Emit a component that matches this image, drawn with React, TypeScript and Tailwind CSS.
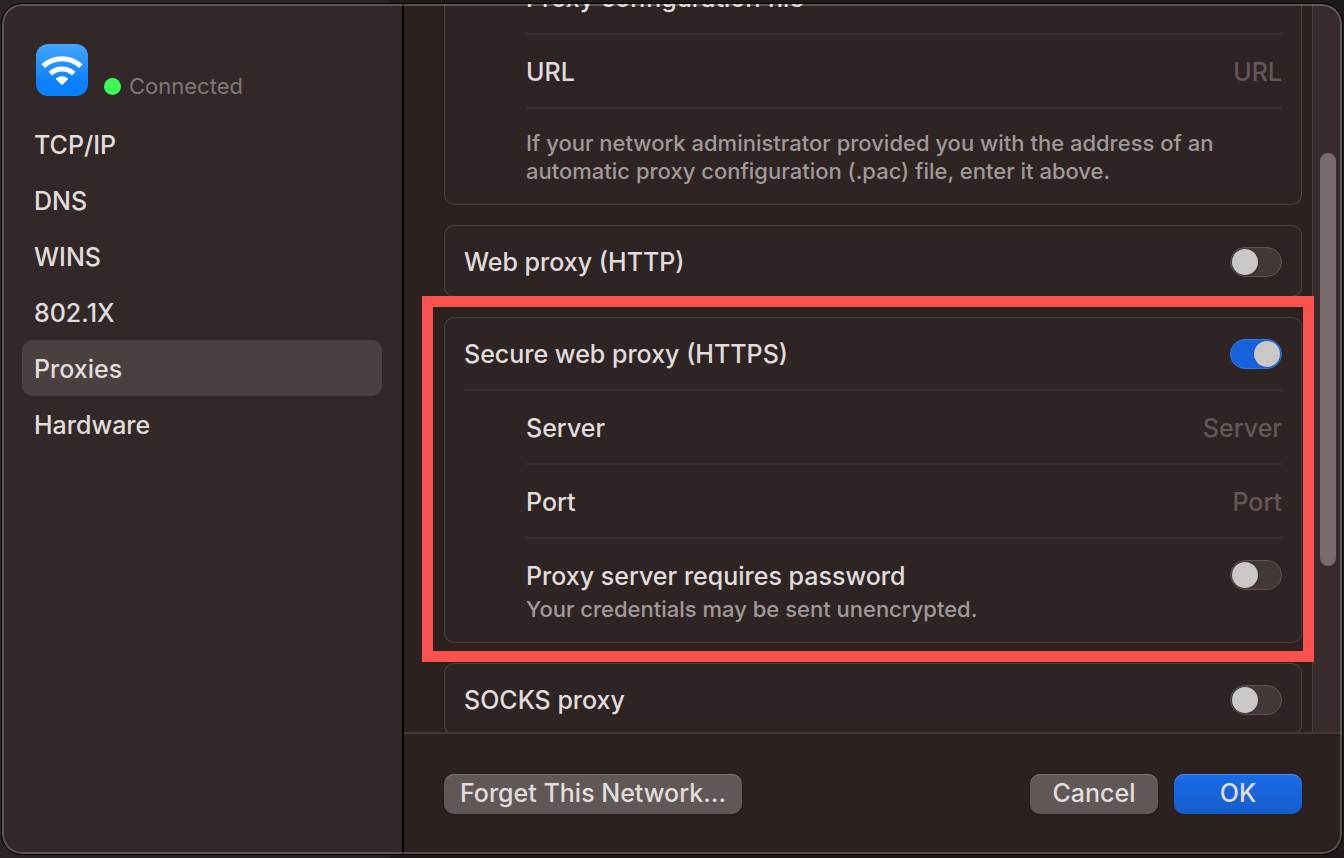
import { useState } from "react";
import type { ReactNode } from "react";
import { clsx } from "clsx";

const tabs = ["TCP/IP", "DNS", "WINS", "802.1X", "Proxies", "Hardware"];

function WifiIcon() {
  return (
    <svg viewBox="0 0 52 52" className="size-13 shrink-0" aria-hidden="true">
      <defs>
        <linearGradient id="wifi-bg" x1="0" y1="0" x2="0" y2="1">
          <stop offset="0" stopColor="#45a5ff" />
          <stop offset="0.75" stopColor="#0a80ff" />
          <stop offset="1" stopColor="#0a80ff" />
        </linearGradient>
      </defs>
      <rect width="52" height="52" rx="12" fill="url(#wifi-bg)" />
      <g fill="none" stroke="#fff" strokeWidth="5.2">
        <path d="M7.2 22.2a27.4 27.4 0 0 1 37.6 0" />
        <path d="M14.3 29.6a17.2 17.2 0 0 1 23.4 0" />
      </g>
      <path d="M25.2 40.6q.8.7 1.6 0l5-5.2q.5-.6-.1-1.1a8.8 8.8 0 0 0-11.4 0q-.6.5-.1 1.1z" fill="#fff" />
    </svg>
  );
}

function Toggle({ id, defaultChecked }: { id: string; defaultChecked?: boolean }) {
  return (
    <input
      id={id}
      type="checkbox"
      role="switch"
      defaultChecked={defaultChecked}
      className="flex h-[30px] w-13 shrink-0 appearance-none items-center rounded-full border border-[#5e5553] bg-[#423836] px-px before:size-[26px] before:rounded-full before:bg-[#cac7c8] before:shadow-sm before:content-[''] checked:justify-end checked:border-[#3577e4] checked:bg-[#1562dc]"
    />
  );
}

function Card({ children }: { children: ReactNode }) {
  return (
    <section className="relative rounded-[10px] bg-[#2f2424] px-5 inset-ring inset-ring-[#4a403f]">
      {children}
    </section>
  );
}

function Row({ nested, divider, children }: { nested?: boolean; divider?: boolean; children: ReactNode }) {
  return (
    <div className={clsx(nested && "pl-[62px]")}>
      <div className={clsx("flex items-center justify-between gap-4 pt-0.5", divider ? "h-[74px] border-b-2 border-[#382d2d]" : "h-18")}>
        {children}
      </div>
    </div>
  );
}

function Field({ id, label }: { id: string; label: string }) {
  return (
    <Row nested divider>
      <label htmlFor={id}>{label}</label>
      <input
        id={id}
        placeholder={label}
        className="min-w-0 flex-1 bg-transparent text-right outline-none placeholder:text-[#625857]"
      />
    </Row>
  );
}

export default function App() {
  const [active, setActive] = useState("Proxies");

  return (
    <main className="h-screen bg-linear-to-r from-[#292424] from-29% to-[#1e1a18] to-29% px-0.5 py-1 font-['Inter',sans-serif] text-[25px] leading-8 font-medium text-[#e0dddc]">
      <div className="relative flex h-full overflow-hidden rounded-[20px] bg-[#2b211f] outline outline-black after:pointer-events-none after:absolute after:inset-0 after:z-20 after:rounded-[20px] after:border-2 after:border-white/22 after:content-['']">
        <aside className="w-[402px] shrink-0 border-r-2 border-black bg-[#322827] px-5 pt-10">
          <div className="mb-5 flex gap-4 pl-3.5">
            <WifiIcon />
            <p className="flex items-center gap-2 self-end text-[22px] leading-5 font-normal text-[#7e7776]">
              <span className="size-[17px] rounded-full bg-[#3dfb54]" />
              Connected
            </p>
          </div>
          <nav>
            {tabs.map((tab) => (
              <button
                key={tab}
                type="button"
                onClick={() => setActive(tab)}
                className={clsx("flex h-14 w-full items-center rounded-[10px] px-3 pt-0.5 text-left", active === tab && "bg-[#4a4040]")}
              >
                {tab}
              </button>
            ))}
          </nav>
        </aside>

        <div className="flex min-w-0 flex-1 flex-col">
          <div className="flex min-h-0 flex-1 overflow-hidden">
            {/* list is scrolled part way down */}
            <div className="relative z-10 -mt-[43px] flex min-w-0 flex-1 flex-col gap-5 pr-2.5 pl-10">
              <Card>
                <Row nested divider>
                  <h2>Proxy configuration file</h2>
                </Row>
                <Field id="pac-url" label="URL" />
                <p className="py-5 pr-12 pl-[62px] text-[22px] leading-7 text-[#9f9998]">
                  If your network administrator provided you with the address of an automatic proxy
                  configuration (.pac) file, enter it above.
                </p>
              </Card>

              <Card>
                <Row>
                  <label htmlFor="http">Web proxy (HTTP)</label>
                  <Toggle id="http" />
                </Row>
              </Card>

              <Card>
                <Row divider>
                  <label htmlFor="https">Secure web proxy (HTTPS)</label>
                  <Toggle id="https" defaultChecked />
                </Row>
                <Field id="server" label="Server" />
                <Field id="port" label="Port" />
                <div className="flex items-start justify-between pt-[21px] pb-5 pl-[62px]">
                  <div>
                    <label htmlFor="password" className="block">Proxy server requires password</label>
                    <p className="pt-[3px] text-[22px] leading-7 text-[#9f9998]">
                      Your credentials may be sent unencrypted.
                    </p>
                  </div>
                  <Toggle id="password" />
                </div>
                {/* highlight frame */}
                <div className="pointer-events-none absolute -top-[21px] -right-3 -bottom-[19px] -left-[22px] border-11 border-[#fa524f]" />
              </Card>

              <Card>
                <Row>
                  <label htmlFor="socks">SOCKS proxy</label>
                  <Toggle id="socks" />
                </Row>
              </Card>
            </div>

            <div className="w-[30px] shrink-0 border-l border-[#4a403f] bg-[#382d2c] pt-[149px] pl-[7px]">
              <div className="h-[413px] w-4 rounded-full bg-[#786d6c]" />
            </div>
          </div>

          <footer className="flex h-[122px] shrink-0 items-center gap-4 border-t-2 border-[#413836] px-10">
            <button type="button" className="mr-auto h-10 rounded-[10px] bg-[#605856] px-4 pb-0.5 shadow-sm inset-shadow-[0_1px_#7b7472]">
              Forget This Network...
            </button>
            <button type="button" className="h-10 w-32 rounded-[10px] bg-[#605856] pb-0.5 shadow-sm inset-shadow-[0_1px_#7b7472]">
              Cancel
            </button>
            <button type="button" className="h-10 w-32 rounded-[10px] bg-linear-to-b from-[#196cea] to-[#155dcb] pb-0.5 shadow-sm inset-shadow-[0_1px_#4b8cef]">
              OK
            </button>
          </footer>
        </div>
      </div>
    </main>
  );
}
